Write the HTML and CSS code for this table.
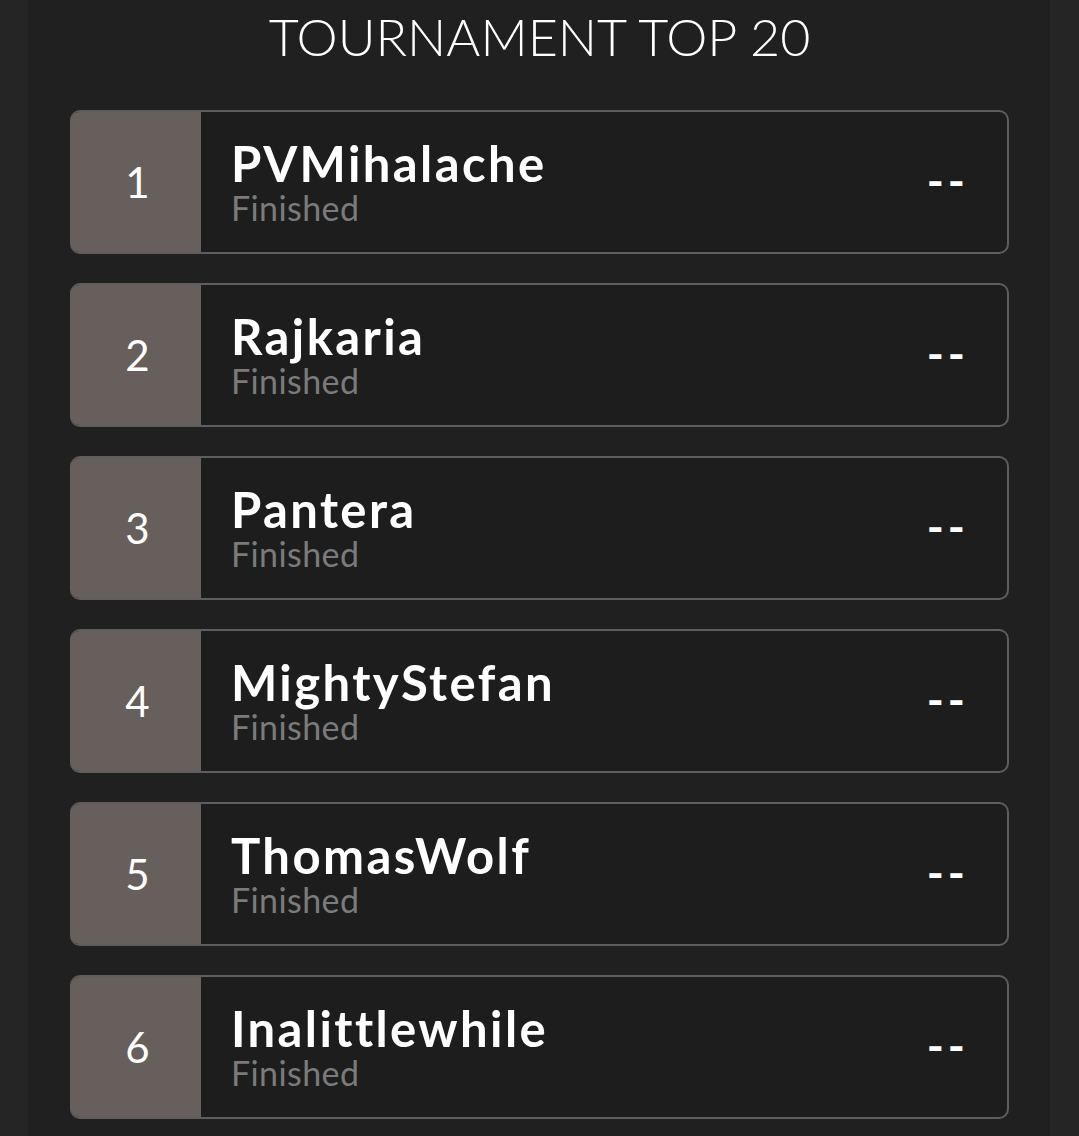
FILE: index.html
```html
<!DOCTYPE html>
<html lang="en">
<head>
  <meta charset="UTF-8" />
  <meta name="viewport" content="width=device-width, initial-scale=1" />
  <title>Tournament Top 20</title>
  <link rel="stylesheet" href="styles.css">
</head>
<body>
  <div class="panel">
    <h1 class="title">TOURNAMENT TOP 20</h1>

    <div class="board">
      <div class="row">
        <div class="rank">1</div>
        <div class="player">
          <div class="name">PVMihalache</div>
          <div class="status">Finished</div>
        </div>
        <div class="score">--</div>
      </div>

      <div class="row">
        <div class="rank">2</div>
        <div class="player">
          <div class="name">Rajkaria</div>
          <div class="status">Finished</div>
        </div>
        <div class="score">--</div>
      </div>

      <div class="row">
        <div class="rank">3</div>
        <div class="player">
          <div class="name">Pantera</div>
          <div class="status">Finished</div>
        </div>
        <div class="score">--</div>
      </div>

      <div class="row">
        <div class="rank">4</div>
        <div class="player">
          <div class="name">MightyStefan</div>
          <div class="status">Finished</div>
        </div>
        <div class="score">--</div>
      </div>

      <div class="row">
        <div class="rank">5</div>
        <div class="player">
          <div class="name">ThomasWolf</div>
          <div class="status">Finished</div>
        </div>
        <div class="score">--</div>
      </div>

      <div class="row">
        <div class="rank">6</div>
        <div class="player">
          <div class="name">Inalittlewhile</div>
          <div class="status">Finished</div>
        </div>
        <div class="score">--</div>
      </div>
    </div>
  </div>
</body>
</html>
```

FILE: styles.css
```css
/* Reset */
* {
  margin: 0;
  padding: 0;
  box-sizing: border-box;
}
body {
  font-family: 'Lato', 'Open Sans', sans-serif;
  background: #252525;
  color: #fff;
  overflow: hidden;
}
.panel {
  background: #202020;
  margin: 0 29px 0 28px;
  min-height: 1136px;
  padding: 6px 41px 40px 42px;
}
.title {
  text-align: center;
  font-size: 52px;
  font-weight: 300;
  line-height: 60px;
  margin-bottom: 44px;
}
.board {
  display: flex;
  flex-direction: column;
  gap: 29px;
}
.row {
  display: flex;
  align-items: stretch;
  height: 144px;
  background: #1d1d1d;
  border: 2px solid #5e5e5e;
  border-left: 0;
  border-radius: 10px;
  overflow: hidden;
}
.rank {
  width: 131px;
  flex-shrink: 0;
  background: #665f5b;
  display: flex;
  align-items: center;
  justify-content: center;
  font-size: 42px;
  font-weight: 400;
  padding-left: 4px;
}
.player {
  flex: 1;
  display: flex;
  flex-direction: column;
  justify-content: center;
  padding-left: 30px;
}
.name {
  font-size: 49px;
  font-weight: 700;
  line-height: 52px;
  letter-spacing: 2.4px;
}
.status {
  font-size: 34px;
  color: #7b7b7b;
  line-height: 38px;
  letter-spacing: 0.4px;
}
.score {
  display: flex;
  align-items: center;
  padding-right: 38px;
  padding-bottom: 4px;
  font-size: 46px;
  font-weight: 700;
  letter-spacing: 4px;
}
```
